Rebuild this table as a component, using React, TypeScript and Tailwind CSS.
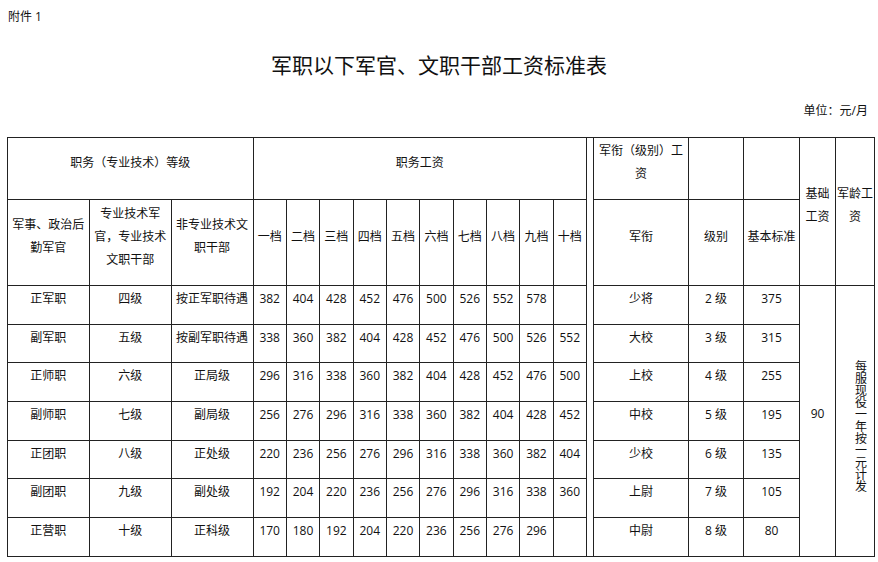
import React from "react";

type Row = [string, string, string, (number | string)[], string, string, string];

const rows: Row[] = [
  ["正军职", "四级", "按正军职待遇", [382, 404, 428, 452, 476, 500, 526, 552, 578, ""], "少将", "2 级", "375"],
  ["副军职", "五级", "按副军职待遇", [338, 360, 382, 404, 428, 452, 476, 500, 526, 552], "大校", "3 级", "315"],
  ["正师职", "六级", "正局级", [296, 316, 338, 360, 382, 404, 428, 452, 476, 500], "上校", "4 级", "255"],
  ["副师职", "七级", "副局级", [256, 276, 296, 316, 338, 360, 382, 404, 428, 452], "中校", "5 级", "195"],
  ["正团职", "八级", "正处级", [220, 236, 256, 276, 296, 316, 338, 360, 382, 404], "少校", "6 级", "135"],
  ["副团职", "九级", "副处级", [192, 204, 220, 236, 256, 276, 296, 316, 338, 360], "上尉", "7 级", "105"],
  ["正营职", "十级", "正科级", [170, 180, 192, 204, 220, 236, 256, 276, 296, ""], "中尉", "8 级", "80"],
];

const grades = ["一档", "二档", "三档", "四档", "五档", "六档", "七档", "八档", "九档", "十档"];

const cell =
  "border border-[#222] text-center align-middle px-[1px] pt-0 pb-[13px] leading-[23px] text-[12px] font-normal";

export default function App() {
  return (
    <div
      className="w-[878px] h-[562px] overflow-hidden bg-white text-[#111]"
      style={{ fontFamily: '"Open Sans", "Noto Sans CJK SC", sans-serif' }}
    >
      <div className="pl-[8px] pt-[9px] text-[12px] leading-[16px]">附件 1</div>
      <div className="mt-[26px] text-center text-[21px] leading-[28px]">军职以下军官、文职干部工资标准表</div>
      <div className="mt-[24px] pr-[10px] text-right text-[12px] leading-[16px]">单位：元/月</div>
      <table className="mt-[18px] ml-[7px] w-[867px] table-fixed border-collapse">
        <colgroup>
          <col className="w-[81.7px]" />
          <col className="w-[82px]" />
          <col className="w-[81.8px]" />
          {grades.map((g) => (
            <col key={g} className="w-[33.35px]" />
          ))}
          <col className="w-[7px]" />
          <col className="w-[95px]" />
          <col className="w-[55px]" />
          <col className="w-[56px]" />
          <col className="w-[36px]" />
          <col className="w-[39px]" />
        </colgroup>
        <tbody>
          <tr className="h-[62px]">
            <td colSpan={3} className={cell}>职务（专业技术）等级</td>
            <td colSpan={10} className={cell}>职务工资</td>
            <td rowSpan={9} className={cell}></td>
            <td className={cell}>军衔（级别）工资</td>
            <td className={cell}></td>
            <td className={cell}></td>
            <td rowSpan={2} className={cell}>基础工资</td>
            <td rowSpan={2} className={cell}>军龄工资</td>
          </tr>
          <tr className="h-[86px]">
            <td className={cell}>军事、政治后勤军官</td>
            <td className={cell}>专业技术军官，专业技术文职干部</td>
            <td className={cell}>非专业技术文职干部</td>
            {grades.map((g) => (
              <td key={g} className={cell}>{g}</td>
            ))}
            <td className={cell}>军衔</td>
            <td className={cell}>级别</td>
            <td className={cell}>基本标准</td>
          </tr>
          {rows.map((r, i) => (
            <tr key={i} className="h-[38.7px]">
              <td className={cell}>{r[0]}</td>
              <td className={cell}>{r[1]}</td>
              <td className={cell}>{r[2]}</td>
              {r[3].map((v, j) => (
                <td key={j} className={cell}>{v}</td>
              ))}
              <td className={cell}>{r[4]}</td>
              <td className={cell}>{r[5]}</td>
              <td className={cell}>{r[6]}</td>
              {i === 0 && (
                <>
                  <td rowSpan={7} className="border border-[#222] text-center align-middle px-[1px] pt-0 pb-[15px] leading-[23px] text-[12px]">
                    90
                  </td>
                  <td rowSpan={7} className="border border-[#222] text-center align-middle pl-[9px] pr-0 pt-[15px] pb-0 text-[12px]">
                    <div className="inline-block [writing-mode:vertical-rl] leading-[14px]">每服现役一年按一元计发</div>
                  </td>
                </>
              )}
            </tr>
          ))}
        </tbody>
      </table>
    </div>
  );
}
